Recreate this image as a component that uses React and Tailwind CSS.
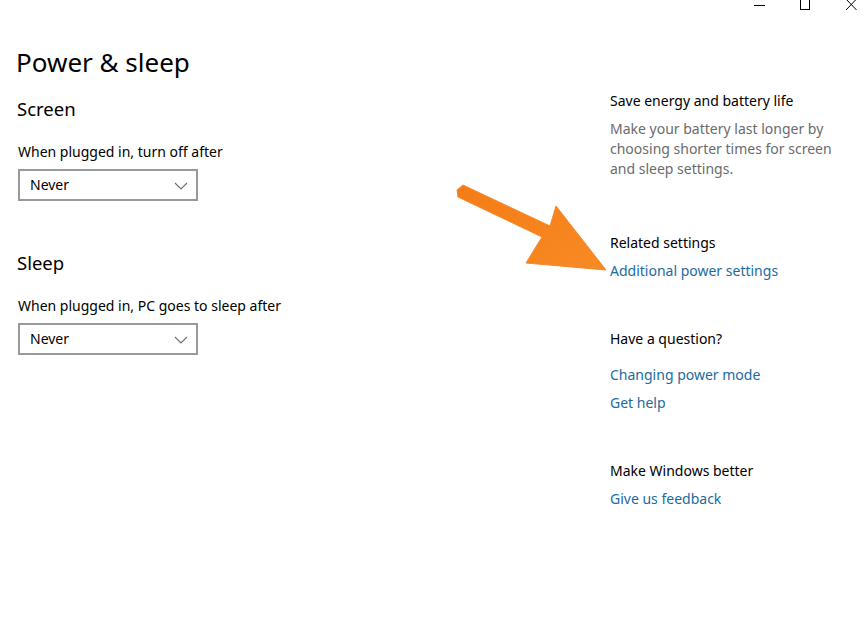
import React from "react";

const font = { fontFamily: '"Noto Sans", "Open Sans", sans-serif' };

function Dropdown({ value }) {
  return (
    <div className="flex items-center justify-between w-[180px] h-[32px] border-2 border-[#999999] pl-[10px] pr-[8px] bg-white">
      <span className="text-[14px] leading-[20px] text-black">{value}</span>
      <svg width="14" height="8" viewBox="0 0 14 8" className="mt-[1px]">
        <path d="M1 1 L7 7 L13 1" fill="none" stroke="#6e6e6e" strokeWidth="1.1" />
      </svg>
    </div>
  );
}

function WindowControls() {
  return (
    <div className="flex h-[12px] items-start justify-end pr-[11px]">
      <svg width="12" height="12" viewBox="0 0 12 12">
        <path d="M0 5.5 H11" stroke="#000" strokeWidth="1" />
      </svg>
      <svg width="12" height="12" viewBox="0 0 12 12" className="ml-[33px]">
        <rect x="1.5" y="-0.5" width="9" height="10" fill="none" stroke="#000" strokeWidth="1" />
      </svg>
      <svg width="12" height="12" viewBox="0 0 12 12" className="ml-[34px]">
        <path d="M1 -1 L11.5 10 M11.5 -1 L1 10" stroke="#000" strokeWidth="1" />
      </svg>
    </div>
  );
}

function Arrow() {
  return (
    <svg
      className="absolute left-0 top-0 pointer-events-none"
      width="868"
      height="630"
      viewBox="0 0 868 630"
    >
      <defs>
        <linearGradient id="ar" x1="0" y1="0" x2="1" y2="1">
          <stop offset="0" stopColor="#f47c16" />
          <stop offset="1" stopColor="#f88a24" />
        </linearGradient>
      </defs>
      <polygon
        points="463,185 550,226 556,206 606,270 526,263 542,237 458,197 457,190"
        fill="url(#ar)"
        stroke="#f28a30"
        strokeWidth="1"
        strokeLinejoin="round"
      />
    </svg>
  );
}

export default function App() {
  return (
    <div className="relative w-[868px] h-[630px] bg-white overflow-hidden text-black" style={font}>
      <WindowControls />
      <div className="flex">
        {/* Left */}
        <div className="w-[610px] shrink-0 pl-[16px]">
          <h1 className="mt-[32px] text-[26px] leading-[36px] font-normal">Power &amp; sleep</h1>
          <div className="pl-[1px]">
            <h2 className="mt-[15px] text-[18.5px] leading-[28px]">Screen</h2>
            <div className="mt-[19px] pl-[1px] text-[14px] leading-[20px]">When plugged in, turn off after</div>
            <div className="mt-[7px] pl-[1px]">
              <Dropdown value="Never" />
            </div>
            <h2 className="mt-[48px] text-[18.5px] leading-[28px]">Sleep</h2>
            <div className="mt-[19px] pl-[1px] text-[14px] leading-[20px]">When plugged in, PC goes to sleep after</div>
            <div className="mt-[7px] pl-[1px]">
              <Dropdown value="Never" />
            </div>
          </div>
        </div>

        {/* Right */}
        <div className="flex flex-col items-start text-[14px] leading-[20px] pr-4">
          <div className="mt-[79px]">Save energy and battery life</div>
          <p className="mt-[8px] w-[235px] text-[#6b6b6b]">
            Make your battery last longer by choosing shorter times for screen and sleep settings.
          </p>
          <div className="mt-[54px]">Related settings</div>
          <a className="mt-[8px] text-[#1b6b9f]">Additional power settings</a>
          <div className="mt-[48px]">Have a question?</div>
          <a className="mt-[16px] text-[#1b6b9f]">Changing power mode</a>
          <a className="mt-[8px] text-[#1b6b9f]">Get help</a>
          <div className="mt-[48px]">Make Windows better</div>
          <a className="mt-[8px] text-[#1b6b9f]">Give us feedback</a>
        </div>
      </div>
      <Arrow />
    </div>
  );
}
